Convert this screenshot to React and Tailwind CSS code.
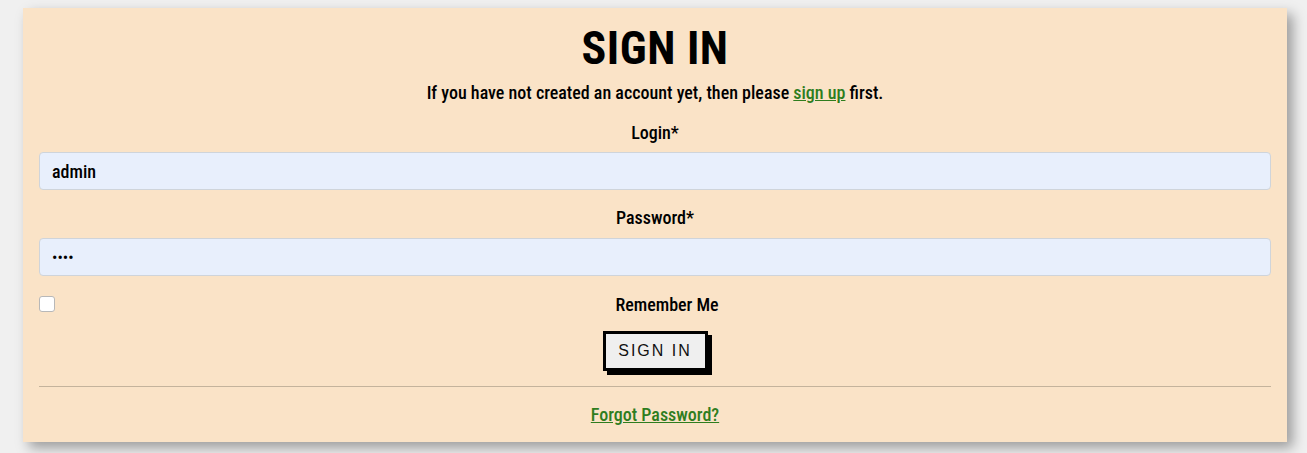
import React from 'react'

const font = { fontFamily: '"Roboto Condensed", "DejaVu Sans Condensed", sans-serif' }

export default function App() {
  return (
    <div className="min-h-[453px] w-full bg-[#f0f0f0] pt-2 pl-[23px] pr-5">
      <div
        className="w-[1264px] h-[434px] bg-[#fae3c7] shadow-[6px_6px_12px_rgba(0,0,0,0.35)] px-4 text-black"
        style={font}
      >
        {/* Header */}
        <h1 className="text-[46px] leading-[46px] font-bold text-center pt-[17px] tracking-[0.5px]">SIGN IN</h1>
        <p className="text-[18px] font-medium text-center mt-[11px] leading-[22px]">
          If you have not created an account yet, then please{' '}
          <a href="#" className="text-[#2e7d1e] underline">sign up</a> first.
        </p>

        {/* Login */}
        <label className="block text-[18px] font-medium text-center mt-[18px] leading-[22px]">Login*</label>
        <input
          defaultValue="admin"
          className="block w-full h-[38px] mt-[8px] rounded-[4px] border border-[#cfd4da] bg-[#e8effc] px-3 text-[18px] font-medium outline-none"
          style={font}
        />

        {/* Password */}
        <label className="block text-[18px] font-medium text-center mt-[17px] leading-[22px]">Password*</label>
        <input
          type="password"
          defaultValue="test"
          className="block w-full h-[38px] mt-[9px] rounded-[4px] border border-[#cfd4da] bg-[#e8effc] px-3 text-[16px] outline-none"
        />

        {/* Remember me */}
        <div className="flex items-center mt-[20px] h-4">
          <span className="w-4 h-4 rounded-[3px] border border-[#b8b8b8] bg-white" />
          <span className="flex-1 text-center text-[18px] font-medium pl-[8px]">Remember Me</span>
        </div>

        <div className="flex justify-center mt-[19px]">
          <button className="w-[105px] h-[40px] border-[3px] border-black bg-[#efefef] shadow-[4px_4px_0_#000] text-[16px] tracking-[2px] text-[#111]" style={{ fontFamily: '"Liberation Sans", Arial, sans-serif' }}>
            SIGN IN
          </button>
        </div>

        <hr className="mt-[15px] border-t border-[#c4b39c]" />

        <div className="text-center mt-[17px]">
          <a href="#" className="text-[18px] font-medium text-[#2e7d1e] underline leading-[22px]">Forgot Password?</a>
        </div>
      </div>
    </div>
  )
}
